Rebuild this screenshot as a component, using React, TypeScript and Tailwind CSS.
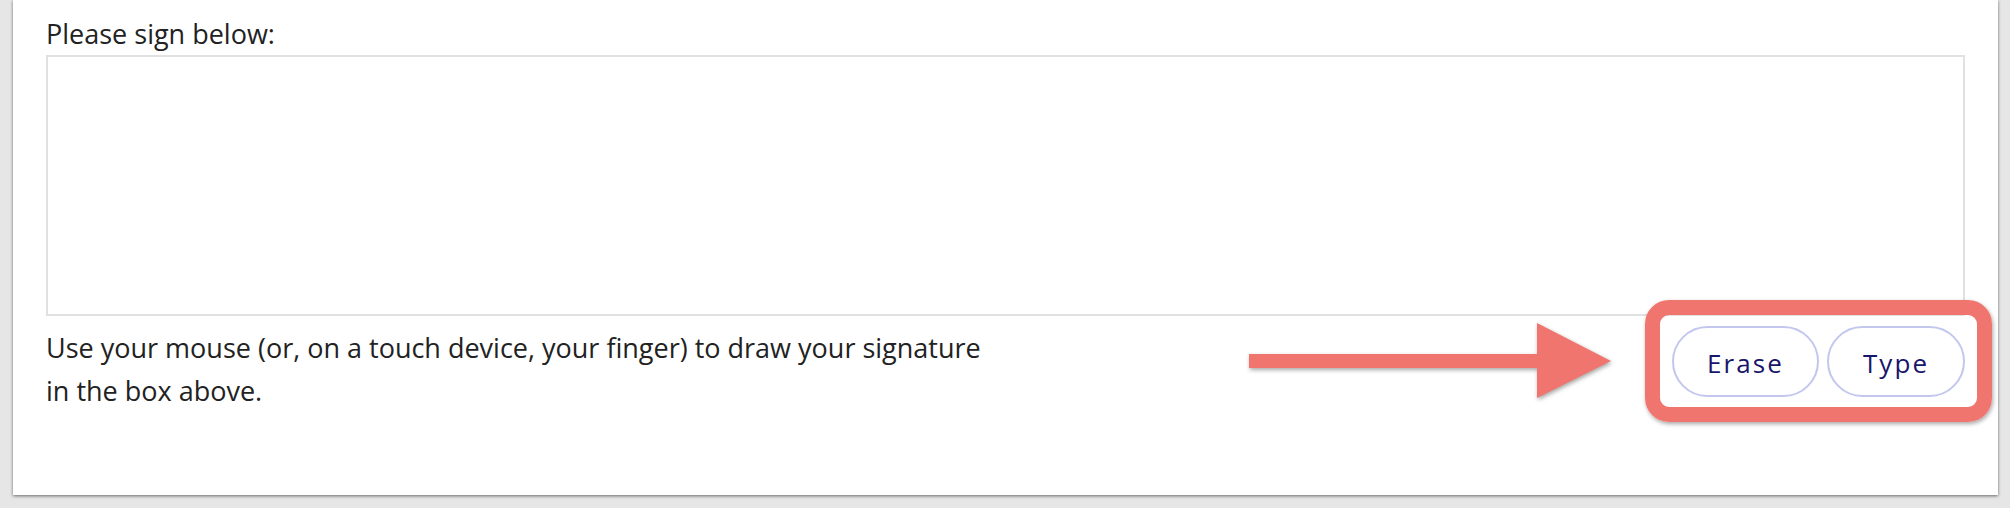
export default function App() {
  return (
    <div className="min-h-[508px] bg-[#e6e6e6] pl-[13px] pr-[12px] font-['Open_Sans',sans-serif] text-[#222]">
      <div className="h-[495px] bg-white px-[33px] pt-[13px] shadow-[0_1px_3px_rgba(0,0,0,0.55)]">
        {/* Label */}
        <p className="text-[27px] leading-[42px]">Please sign below:</p>

        {/* Signature pad */}
        <div className="h-[261px] border-2 border-[#e1e1e1] bg-white" />

        {/* Help text + actions */}
        <div className="mt-[10px] flex items-start justify-between">
          <p className="w-[955px] text-[27px] leading-[43px]">
            Use your mouse (or, on a touch device, your finger) to draw your signature in the box above.
          </p>

          <div className="relative flex gap-[8px]">
            <button className="h-[71px] w-[147px] rounded-full border-2 border-[#c3c7ee] bg-white pt-[4px] text-[26px] tracking-[0.08em] text-[#18166a]">
              Erase
            </button>
            <button className="h-[71px] w-[138px] rounded-full border-2 border-[#c3c7ee] bg-white pt-[4px] text-[26px] tracking-[0.08em] text-[#18166a]">
              Type
            </button>

            {/* Annotation: highlight box */}
            <div className="pointer-events-none absolute -bottom-[25px] -left-[27px] -right-[27px] -top-[26px] rounded-[24px] border-[15px] border-[#f0756e] shadow-[1px_2px_4px_rgba(0,0,0,0.35)]" />

            {/* Annotation: arrow */}
            <svg
              className="pointer-events-none absolute -left-[423px] -top-[3px] overflow-visible drop-shadow-[1px_2px_2px_rgba(0,0,0,0.35)]"
              width="362"
              height="75"
              viewBox="0 0 362 75"
            >
              <path d="M0 31 H288 V0 L362 38 L288 75 V45 H0 Z" fill="#f0756e" />
            </svg>
          </div>
        </div>
      </div>
    </div>
  );
}
